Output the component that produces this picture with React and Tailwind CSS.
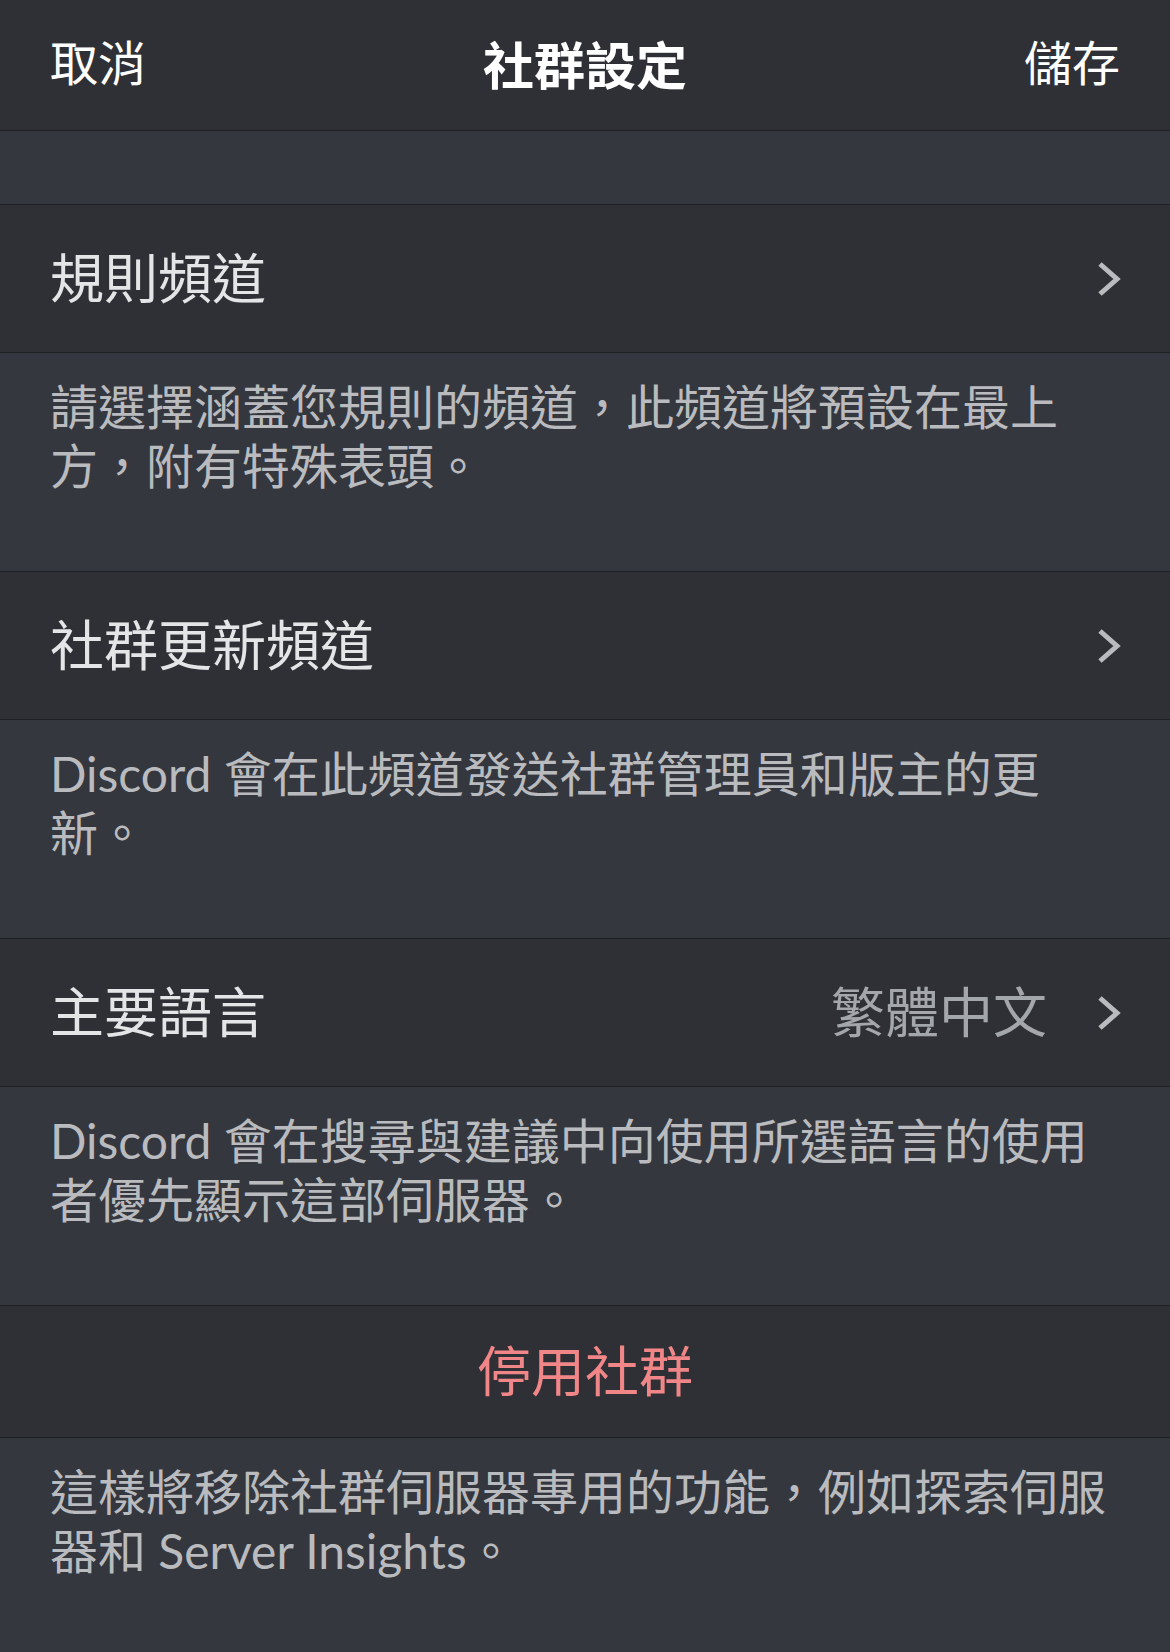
import React from 'react';

const font = { fontFamily: 'Lato, "Noto Sans CJK TC", sans-serif' };

const Chevron = () => (
  <svg width="24" height="36" viewBox="0 0 24 36" className="shrink-0">
    <path d="M3 3 L20 18 L3 33" fill="none" stroke="#b9bbbe" strokeWidth="5" strokeLinejoin="miter" />
  </svg>
);

const Row = ({ title, value }) => (
  <div className="h-[149px] flex items-center justify-between pl-[50px] pr-[49px] bg-[#2f3035] border-y border-[#1e1f22]">
    <span className="text-[54px] leading-none text-[#e4e5e7]">{title}</span>
    <div className="flex items-center gap-[50px]">
      {value && <span className="text-[54px] leading-none text-[#a3a6aa]">{value}</span>}
      <Chevron />
    </div>
  </div>
);

const Note = ({ children }) => (
  <div className="bg-[#35373e] pl-[50px] pr-[60px] pt-[24px] pb-[76px] text-[48px] leading-[59px] text-[#b9bbbe]">
    {children}
  </div>
);

export default function App() {
  return (
    <div className="w-[1170px] h-[1652px] bg-[#35373e] overflow-hidden" style={font}>
      <div className="h-[131px] flex items-center justify-between px-[50px] bg-[#2f3035] border-b border-[#1e1f22]">
        <span className="text-[48px] leading-none text-white -mt-[4px]">取消</span>
        <span className="text-[51px] leading-none font-bold text-white">社群設定</span>
        <span className="text-[48px] leading-none text-white -mt-[4px]">儲存</span>
      </div>
      <div className="h-[73px]" />

      <Row title="規則頻道" />
      <Note>請選擇涵蓋您規則的頻道，此頻道將預設在最上方，附有特殊表頭。</Note>

      <Row title="社群更新頻道" />
      <Note>Discord 會在此頻道發送社群管理員和版主的更新。</Note>

      <Row title="主要語言" value="繁體中文" />
      <Note>Discord 會在搜尋與建議中向使用所選語言的使用者優先顯示這部伺服器。</Note>

      <div className="h-[133px] flex items-center justify-center bg-[#2f3035] border-y border-[#1e1f22]">
        <span className="text-[54px] leading-none text-[#f08688]">停用社群</span>
      </div>
      <Note>這樣將移除社群伺服器專用的功能，例如探索伺服器和 Server Insights。</Note>
    </div>
  );
}
